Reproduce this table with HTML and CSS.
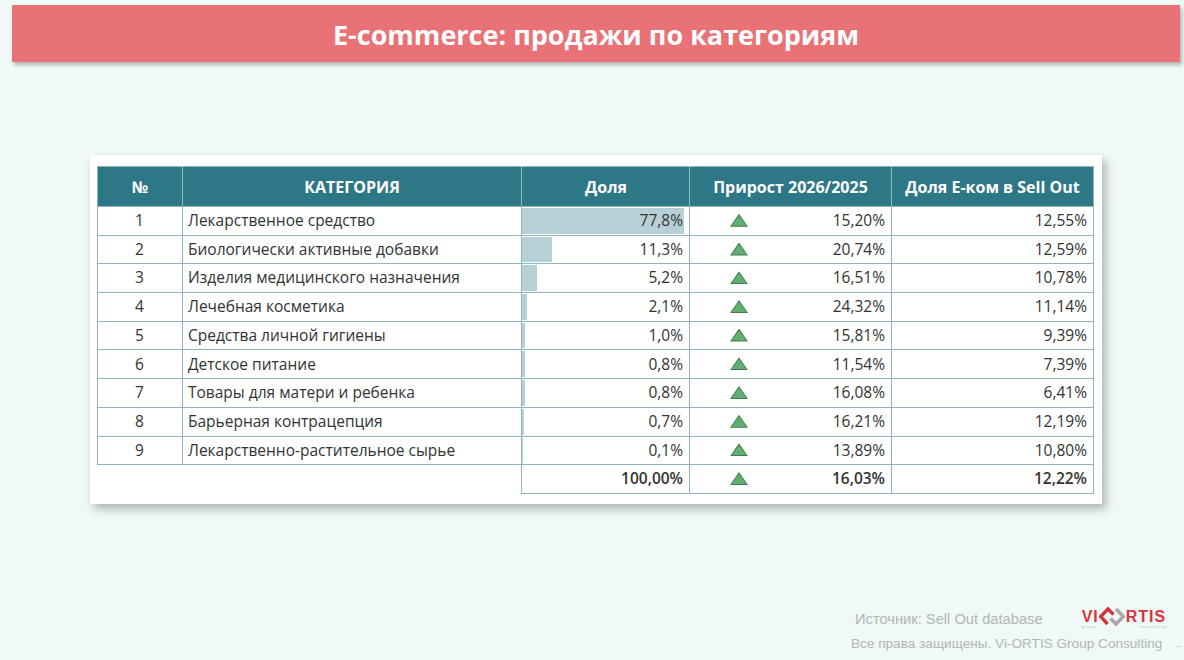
FILE: index.html
```html
<!DOCTYPE html>
<html lang="ru">
<head>
<meta charset="utf-8">
<title>E-commerce: продажи по категориям</title>
<link rel="stylesheet" href="styles.css">
</head>
<body>
<div class="page">
  <header class="titlebar"><h1>E-commerce: продажи по категориям</h1></header>
  <section class="card">
    <table class="grid">
      <colgroup>
        <col class="c-num"><col class="c-cat"><col class="c-share"><col class="c-growth"><col class="c-ecom">
      </colgroup>
      <thead>
        <tr><th>№</th><th>КАТЕГОРИЯ</th><th class="th-right">Доля</th><th>Прирост 2026/2025</th><th>Доля Е-ком в Sell Out</th></tr>
      </thead>
      <tbody>
        <tr><td class="num">1</td><td class="cat">Лекарственное средство</td><td class="share" style="--w:162px">77,8%</td><td class="growth"><span class="tri"></span><span>15,20%</span></td><td class="val">12,55%</td></tr>
        <tr><td class="num">2</td><td class="cat">Биологически активные добавки</td><td class="share" style="--w:30px">11,3%</td><td class="growth"><span class="tri"></span><span>20,74%</span></td><td class="val">12,59%</td></tr>
        <tr><td class="num">3</td><td class="cat">Изделия медицинского назначения</td><td class="share" style="--w:15px">5,2%</td><td class="growth"><span class="tri"></span><span>16,51%</span></td><td class="val">10,78%</td></tr>
        <tr><td class="num">4</td><td class="cat">Лечебная косметика</td><td class="share" style="--w:5px">2,1%</td><td class="growth"><span class="tri"></span><span>24,32%</span></td><td class="val">11,14%</td></tr>
        <tr><td class="num">5</td><td class="cat">Средства личной гигиены</td><td class="share" style="--w:3px">1,0%</td><td class="growth"><span class="tri"></span><span>15,81%</span></td><td class="val">9,39%</td></tr>
        <tr><td class="num">6</td><td class="cat">Детское питание</td><td class="share" style="--w:3px">0,8%</td><td class="growth"><span class="tri"></span><span>11,54%</span></td><td class="val">7,39%</td></tr>
        <tr><td class="num">7</td><td class="cat">Товары для матери и ребенка</td><td class="share" style="--w:3px">0,8%</td><td class="growth"><span class="tri"></span><span>16,08%</span></td><td class="val">6,41%</td></tr>
        <tr><td class="num">8</td><td class="cat">Барьерная контрацепция</td><td class="share" style="--w:2px">0,7%</td><td class="growth"><span class="tri"></span><span>16,21%</span></td><td class="val">12,19%</td></tr>
        <tr><td class="num">9</td><td class="cat">Лекарственно-растительное сырье</td><td class="share" style="--w:1px">0,1%</td><td class="growth"><span class="tri"></span><span>13,89%</span></td><td class="val">10,80%</td></tr>
        <tr class="total"><td class="blank"></td><td class="blank"></td><td class="share">100,00%</td><td class="growth"><span class="tri"></span><span>16,03%</span></td><td class="val">12,22%</td></tr>
      </tbody>
    </table>
  </section>
  <footer class="foot">
    <div class="foot-row">
      <span class="source">Источник: Sell Out database</span>
      <div class="logo">
        <div class="logo-word">
          <span class="logo-txt">VI</span>
          <svg class="logo-mark" width="26" height="21" viewBox="0 0 26 20">
            <polyline points="17,2.5 24.3,10 17,17.5 11.5,12" fill="none" stroke="#a8a8a8" stroke-width="3.4" stroke-linejoin="miter"/>
            <polyline points="8.5,17.5 1.7,10 9,2.5 14.5,8" fill="none" stroke="#d9343d" stroke-width="3.4" stroke-linejoin="miter"/>
          </svg>
          <span class="logo-txt">RTIS</span>
        </div>
        <div class="logo-sub"><span>group</span><span>consulting</span></div>
      </div>
    </div>
    <div class="foot-row2">
      <span class="rights">Все права защищены. Vi-ORTIS Group Consulting</span>
      <span class="arrow">→</span>
    </div>
  </footer>
</div>
</body>
</html>
```
FILE: styles.css
```css
html, body {
  margin: 0;
  padding: 0;
}
body {
  background: #eff9f6;
  font-family: "Open Sans", "Noto Sans", "DejaVu Sans", sans-serif;
  color: #333;
}
.page {
  width: 1184px;
  height: 660px;
  display: flex;
  flex-direction: column;
  overflow: hidden;
}
.titlebar {
  margin: 5px 4px 0 12px;
  height: 57px;
  background: #e87276;
  box-shadow: 2px 3px 4px rgba(0, 0, 0, 0.28);
  display: flex;
  align-items: center;
  justify-content: center;
}
.titlebar h1 {
  margin: 0;
  color: #fff;
  font-size: 27px;
  font-weight: 700;
  letter-spacing: 0;
  padding-top: 2px;
}
.card {
  margin: 93px 0 0 90px;
  width: 1012px;
  box-sizing: border-box;
  padding: 11px 9px 10px 7px;
  background: #fff;
  box-shadow: 4px 5px 9px rgba(0, 0, 0, 0.28);
}
.grid {
  border-collapse: collapse;
  table-layout: fixed;
  width: 996px;
  font-size: 15.5px;
}
.c-num { width: 85px; }
.c-cat { width: 339px; }
.c-share { width: 168px; }
.c-growth { width: 202px; }
.c-ecom { width: 202px; }
.grid th {
  background: #2e7787;
  color: #fff;
  font-weight: 700;
  font-size: 16px;
  height: 39px;
  padding: 0 4px;
  border: 1px solid #8db6c1;
  text-align: center;
}
.grid th.th-right {
  text-align: right;
  padding-right: 62px;
}
.grid td {
  height: 27.7px;
  padding: 0 6px 0 5px;
  border: 1px solid #8db6c1;
  white-space: nowrap;
  line-height: 1;
}
.grid td.num { text-align: center; }
.grid td.cat { text-align: left; }
.grid td.share {
  text-align: right;
  background-image: linear-gradient(#b7d0d6, #b7d0d6);
  background-repeat: no-repeat;
  background-position: left center;
  background-size: var(--w, 0px) calc(100% - 2px);
}
.grid td.val { text-align: right; }
.grid td.growth {
  text-align: right;
  position: relative;
}
.tri {
  position: absolute;
  left: 40px;
  top: 50%;
  margin-top: -7px;
  width: 18px;
  height: 13px;
  background: #3f7d4c;
  clip-path: polygon(50% 0, 100% 100%, 0 100%);
}
.tri::after {
  content: "";
  position: absolute;
  left: 1.6px;
  top: 1.8px;
  right: 1.6px;
  bottom: 1px;
  background: #62ad70;
  clip-path: polygon(50% 0, 100% 100%, 0 100%);
}
.total td {
  font-weight: 600;
}
.total td.blank {
  border: none;
}
.foot {
  margin-top: auto;
  margin-left: 851px;
  padding-bottom: 9px;
  font-family: "Liberation Sans", Arial, sans-serif;
  color: #b2b5b4;
}
.foot-row {
  display: flex;
  align-items: flex-start;
  padding-left: 4px;
}
.source {
  font-size: 14.7px;
  margin-top: 5px;
}
.logo {
  margin-left: 39px;
  display: flex;
  flex-direction: column;
  align-items: flex-start;
}
.logo-word {
  display: flex;
  align-items: center;
  height: 21px;
}
.logo-txt {
  font-family: "Liberation Sans", Arial, sans-serif;
  font-weight: 700;
  font-size: 16px;
  color: #d9343d;
  letter-spacing: 1px;
}
.logo-mark {
  margin: 0 1px 0 0;
}
.logo-sub {
  display: flex;
  justify-content: space-between;
  width: 86px;
  font-size: 3.5px;
  letter-spacing: 1.3px;
  color: #b0b0b0;
  margin-top: -2px;
}
.logo-sub span:last-child {
  margin-left: 18px;
}
.foot-row2 {
  margin-top: 7px;
  display: flex;
  align-items: baseline;
}
.rights {
  font-size: 13.6px;
}
.arrow {
  font-size: 8px;
  margin-left: 11px;
  color: #9aa;
}
```
